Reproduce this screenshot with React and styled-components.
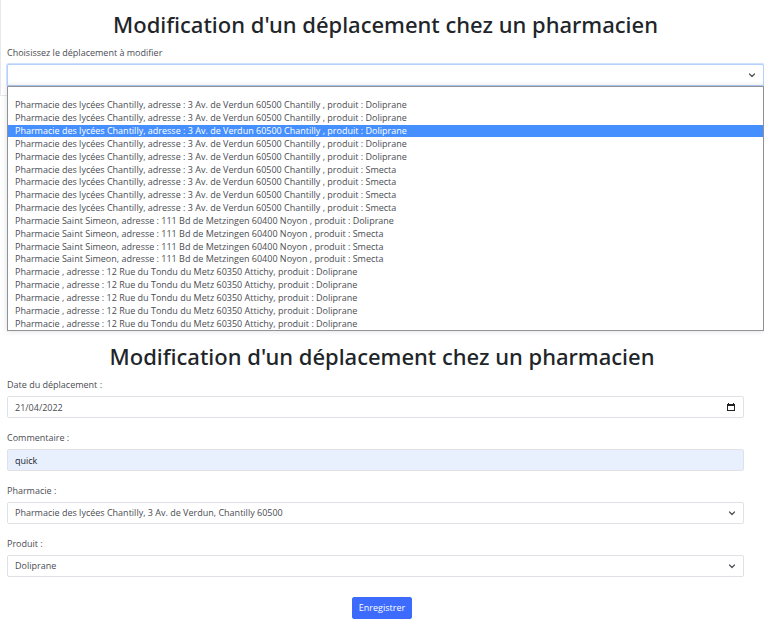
import React from "react";
import styled, { createGlobalStyle, css } from "styled-components";

const GlobalStyle = createGlobalStyle`
  *, *::before, *::after { box-sizing: border-box; }
  body {
    margin: 0;
    background: #fff;
    color: #4a4d52;
    font-family: "Open Sans", "Noto Sans", sans-serif;
    font-size: 9px;
    line-height: 14px;
  }
`;

const Page = styled.main`
  display: flex;
  flex-direction: column;
`;

const Picker = styled.section`
  padding-bottom: 236px;
`;

const Card = styled.div`
  display: flex;
  flex-direction: column;
  padding: 8px 0 9px 6px;
  border-left: 1px solid #e6e8ec;
  border-bottom: 1px solid #e6e8ec;
`;

const Title = styled.h1`
  margin: 0 0 6px;
  color: #212529;
  font-family: "Noto Sans", sans-serif;
  font-size: 22px;
  font-weight: 500;
  line-height: 32px;
  text-align: center;
`;

const Form = styled.form`
  display: flex;
  flex-direction: column;
  padding: 8px 0 24px;
`;

const Fields = styled.div`
  display: flex;
  flex-direction: column;
  gap: 13px;
  padding: 0 20px 20px 7px;
`;

const Field = styled.div`
  display: flex;
  flex-direction: column;
  gap: 4px;
`;

const Label = styled.label`
  line-height: 14px;
`;

const Control = styled.div`
  position: relative;
  display: flex;
`;

const control = css`
  width: 100%;
  height: 22px;
  margin: 0;
  padding: 0 24px 0 7px;
  border: 1px solid #dee2e6;
  border-radius: 2px;
  background: #fff;
  color: inherit;
  font: inherit;
  outline: none;
`;

const Input = styled.input`
  ${control}
  ${({ $filled }) => $filled && css`
    background: #e8f0fe;
    color: #212529;
  `}
`;

const Select = styled.select`
  ${control}
  appearance: none;
  ${({ $open }) => $open && css`
    border-color: #b5d0fc;
    box-shadow: 0 0 0 1px #cfe0fd;
  `}
`;

const Chevron = styled.svg`
  position: absolute;
  top: 7px;
  right: 8px;
  width: 8px;
  height: 8px;
  pointer-events: none;
`;

const DateButton = styled.button`
  position: absolute;
  top: 7px;
  right: 9px;
  display: flex;
  padding: 0;
  border: 0;
  background: none;
`;

const Menu = styled.ul`
  position: absolute;
  top: 100%;
  left: 0;
  right: 0;
  z-index: 1;
  display: grid;
  grid-template-rows: 12px;
  grid-auto-rows: 1fr;
  height: 245px;
  margin: 0;
  padding: 0;
  border: 1px solid #8f9297;
  background: #fff;
  box-shadow: 0 0 6px rgba(0, 0, 0, 0.14);
  list-style: none;
`;

const Option = styled.li`
  display: flex;
  align-items: center;
  min-height: 0;
  padding: 0 7px;
  line-height: 12px;
  white-space: nowrap;
  ${({ $active }) => $active && css`
    background: #468fff;
    color: #fff;
  `}
`;

const Submit = styled.button`
  align-self: center;
  height: 22px;
  padding: 0 6px;
  border: 1px solid #3d6bfd;
  border-radius: 2px;
  background: #3d6bfd;
  color: #fff;
  font: inherit;
`;

const chantilly = "Pharmacie des lycées Chantilly, adresse : 3 Av. de Verdun 60500 Chantilly , produit : ";
const noyon = "Pharmacie Saint Simeon, adresse : 111 Bd de Metzingen 60400 Noyon , produit : ";
const attichy = "Pharmacie , adresse : 12 Rue du Tondu du Metz 60350 Attichy, produit : ";

const trips = [
  ...Array(5).fill(chantilly + "Doliprane"),
  ...Array(4).fill(chantilly + "Smecta"),
  noyon + "Doliprane",
  ...Array(3).fill(noyon + "Smecta"),
  ...Array(5).fill(attichy + "Doliprane"),
];

function ChevronIcon() {
  return (
    <Chevron viewBox="0 0 16 16" fill="none" stroke="#4b5157" strokeWidth="2.4" strokeLinecap="round" strokeLinejoin="round" aria-hidden="true">
      <path d="m3 6 5 5 5-5" />
    </Chevron>
  );
}

function SelectField({ id, label, value }) {
  return (
    <Field>
      <Label htmlFor={id}>{label}</Label>
      <Control>
        <Select id={id} defaultValue={value}>
          <option>{value}</option>
        </Select>
        <ChevronIcon />
      </Control>
    </Field>
  );
}

export default function App() {
  return (
    <>
      <GlobalStyle />
      <Page>
        <Picker>
          <Card>
            <Title>Modification d'un déplacement chez un pharmacien</Title>
            <Field>
              <Label htmlFor="trip">Choisissez le déplacement à modifier</Label>
              <Control>
                <Select id="trip" $open defaultValue="">
                  <option value="" />
                </Select>
                <ChevronIcon />
                <Menu role="listbox" aria-label="Déplacements">
                  <Option role="option" aria-selected="false" />
                  {trips.map((trip, i) => (
                    <Option key={i} role="option" aria-selected={i === 2} $active={i === 2}>
                      {trip}
                    </Option>
                  ))}
                </Menu>
              </Control>
            </Field>
          </Card>
        </Picker>
        <Form onSubmit={(e) => e.preventDefault()}>
          <Title as="h2">Modification d'un déplacement chez un pharmacien</Title>
          <Fields>
            <Field>
              <Label htmlFor="date">Date du déplacement :</Label>
              <Control>
                <Input id="date" type="text" defaultValue="21/04/2022" />
                <DateButton type="button" aria-label="Ouvrir le calendrier">
                  <svg width="8" height="8" viewBox="0 0 8 8" aria-hidden="true">
                    <path fill="#222" fillRule="evenodd" d="M1 0h1v1h4V0h1v1h1v7H0V1h1zM1 3v4h6V3z" />
                  </svg>
                </DateButton>
              </Control>
            </Field>
            <Field>
              <Label htmlFor="comment">Commentaire :</Label>
              <Control>
                <Input id="comment" type="text" defaultValue="quick" $filled />
              </Control>
            </Field>
            <SelectField id="pharmacy" label="Pharmacie :" value="Pharmacie des lycées Chantilly, 3 Av. de Verdun, Chantilly 60500" />
            <SelectField id="product" label="Produit :" value="Doliprane" />
          </Fields>
          <Submit type="submit">Enregistrer</Submit>
        </Form>
      </Page>
    </>
  );
}
